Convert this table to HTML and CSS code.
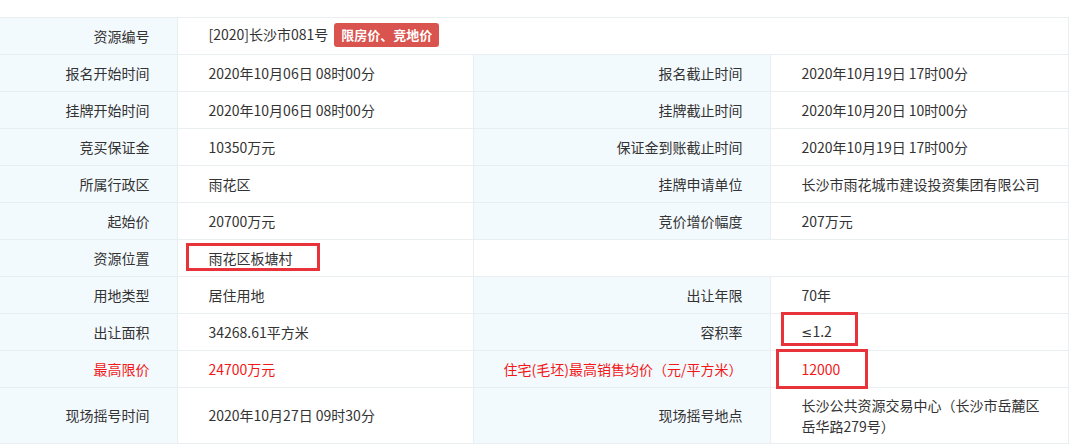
FILE: index.html
```html
<!DOCTYPE html>
<html lang="zh-CN">
<head>
<meta charset="utf-8">
<link rel="stylesheet" href="styles.css">
</head>
<body>
<div class="wrap">
  <table class="info">
    <colgroup>
      <col class="c1"><col class="c2"><col class="c3"><col class="c4">
    </colgroup>
    <tr>
      <th>资源编号</th>
      <td colspan="3">[2020]长沙市081号<span class="tag">限房价、竞地价</span></td>
    </tr>
    <tr>
      <th>报名开始时间</th><td>2020年10月06日 08时00分</td>
      <th>报名截止时间</th><td>2020年10月19日 17时00分</td>
    </tr>
    <tr>
      <th>挂牌开始时间</th><td>2020年10月06日 08时00分</td>
      <th>挂牌截止时间</th><td>2020年10月20日 10时00分</td>
    </tr>
    <tr>
      <th>竞买保证金</th><td>10350万元</td>
      <th>保证金到账截止时间</th><td>2020年10月19日 17时00分</td>
    </tr>
    <tr>
      <th>所属行政区</th><td>雨花区</td>
      <th>挂牌申请单位</th><td>长沙市雨花城市建设投资集团有限公司</td>
    </tr>
    <tr>
      <th>起始价</th><td>20700万元</td>
      <th>竞价增价幅度</th><td>207万元</td>
    </tr>
    <tr>
      <th>资源位置</th><td>雨花区板塘村</td>
      <td class="blank" colspan="2"></td>
    </tr>
    <tr>
      <th>用地类型</th><td>居住用地</td>
      <th>出让年限</th><td>70年</td>
    </tr>
    <tr>
      <th>出让面积</th><td>34268.61平方米</td>
      <th>容积率</th><td><span class="sym">≤</span>1.2</td>
    </tr>
    <tr class="red">
      <th>最高限价</th><td>24700万元</td>
      <th>住宅(毛坯)最高销售均价（元/平方米）</th><td>12000</td>
    </tr>
    <tr class="tall">
      <th>现场摇号时间</th><td>2020年10月27日 09时30分</td>
      <th>现场摇号地点</th><td>长沙公共资源交易中心（长沙市岳麓区岳华路279号）</td>
    </tr>
  </table>
  <div class="mark m1"></div>
  <div class="mark m2"></div>
  <div class="mark m3"></div>
</div>
</body>
</html>
```

FILE: styles.css
```css
html, body {
  margin: 0;
  padding: 0;
  background: #fff;
}
body {
  font-family: "Microsoft YaHei", "Noto Sans CJK SC", sans-serif;
  font-size: 14px;
  color: #333;
}
.wrap {
  position: relative;
  padding-top: 17px;
  width: 1068px;
}
.info {
  border-collapse: collapse;
  table-layout: fixed;
  width: 1068px;
}
.c1 { width: 177px; }
.c2 { width: 296px; }
.c3 { width: 297px; }
.c4 { width: 298px; }
.info th,
.info td {
  border: 1px solid #e9eef1;
  height: 36px;
  padding: 0;
  line-height: 21px;
  vertical-align: middle;
  font-weight: normal;
}
.info th {
  background: #f3fafe;
  text-align: right;
  padding-right: 27px;
}
.info td {
  background: #fff;
  text-align: left;
  padding-left: 31px;
  padding-right: 20px;
}
.info th:first-child {
  border-left: none;
}
.info td.blank {
  background: #fff;
}
.info tr.red th,
.info tr.red td {
  color: #f21818;
}
.info tr.tall th,
.info tr.tall td {
  height: 55px;
}
.sym {
  font-family: "DejaVu Sans", sans-serif;
  font-size: 13px;
}
.tag {
  display: inline-block;
  margin-left: 6px;
  padding: 0 7px;
  height: 24px;
  line-height: 24px;
  background: #d9534f;
  color: #fff;
  font-weight: bold;
  font-size: 13px;
  border-radius: 3px;
  vertical-align: middle;
  position: relative;
  top: -1px;
}
.mark {
  position: absolute;
  border: 3px solid #e8333a;
  box-sizing: border-box;
}
.m1 { left: 186px; top: 243px; width: 134px; height: 28px; }
.m2 { left: 781px; top: 312px; width: 77px; height: 34px; }
.m3 { left: 776px; top: 349px; width: 92px; height: 40px; }
```
